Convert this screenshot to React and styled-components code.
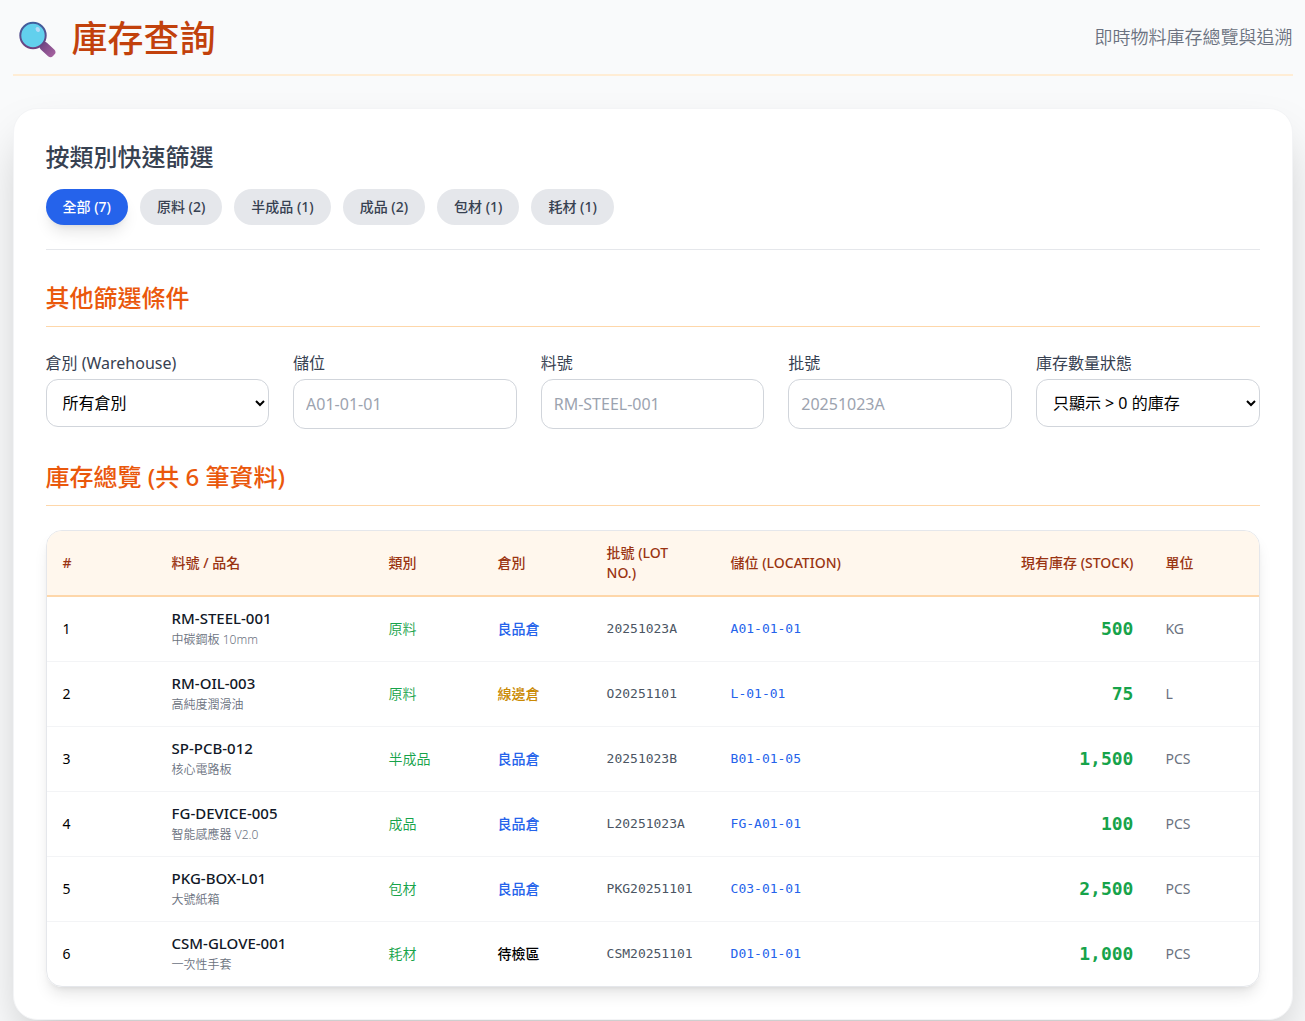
import React, { useState } from 'react';
import styled, { createGlobalStyle } from 'styled-components';

const GlobalStyle = createGlobalStyle`
*{
box-sizing: border-box;
}
body{
margin: 0;
background: #f9fafb;
color: #000;
font-family: 'Noto Sans', 'Noto Sans CJK TC', sans-serif;
font-size: 16px;
line-height: 24px;
}
`
const Page = styled.div`
max-width: 1280px;
margin: 0 auto;
padding-bottom: 32px;
`
const Header = styled.header`
display: flex;
justify-content: space-between;
align-items: center;
padding: 16px 0;
border-bottom: 2px solid #ffedd5;
margin-bottom: 32px;
`
const PageTitle = styled.h1`
display: flex;
align-items: center;
gap: 12px;
margin: 0;
padding: 4px 0 0 3px;
font-size: 36px;
font-weight: 500;
line-height: 38px;
color: #c2410c;
`
const Subtitle = styled.p`
margin: 0;
font-size: 18px;
font-weight: 350;
line-height: 28px;
color: #6b7280;
`
const Card = styled.main`
background: white;
border: 1px solid #f3f4f6;
border-radius: 24px;
padding: 32px;
box-shadow: 0 25px 50px -12px rgba(0, 0, 0, 0.25);
`
const QuickFilter = styled.section`
padding-bottom: 24px;
border-bottom: 1px solid #e5e7eb;
margin-bottom: 32px;
`
const QuickTitle = styled.h2`
margin: 0 0 16px;
font-size: 24px;
font-weight: 500;
line-height: 32px;
color: #374151;
`
const Pills = styled.div`
display: flex;
flex-wrap: wrap;
gap: 12px;
`
const Pill = styled.button`
border: none;
border-radius: 18px;
padding: 8px 17px;
font-family: inherit;
font-size: 14px;
font-weight: 500;
line-height: 20px;
cursor: pointer;
color: ${props => props.$active ? 'white' : '#374151'};
background: ${props => props.$active ? '#2563eb' : '#e5e7eb'};
box-shadow: ${props => props.$active ? '0 10px 15px -3px rgba(0, 0, 0, 0.1), 0 4px 6px -4px rgba(0, 0, 0, 0.1)' : 'none'};
`
const SectionTitle = styled.h2`
margin: 0 0 24px;
padding-bottom: 12px;
border-bottom: 1px solid #fed7aa;
font-size: 24px;
font-weight: 500;
line-height: 32px;
color: #ea580c;
`
const Filters = styled.div`
display: grid;
grid-template-columns: repeat(5, minmax(0, 1fr));
gap: 24px;
align-items: start;
margin-bottom: 32px;
`
const Field = styled.div`
display: flex;
flex-direction: column;
gap: 4px;
`
const Label = styled.label`
color: #374151;
`
const Select = styled.select`
width: 100%;
height: 48px;
padding: 0 0 0 12px;
border: 1px solid #d1d5db;
border-radius: 12px;
background: white;
color: #000;
font-family: inherit;
font-size: 16px;
`
const Input = styled.input`
width: 100%;
height: 50px;
padding: 12px;
border: 1px solid #d1d5db;
border-radius: 12px;
background: white;
font-family: inherit;
font-size: 16px;
&::placeholder{
color: #9ca3af;
}
`
const TableBox = styled.div`
overflow: hidden;
border: 1px solid #e5e7eb;
border-radius: 16px;
box-shadow: 0 10px 15px -3px rgba(0, 0, 0, 0.1), 0 4px 6px -4px rgba(0, 0, 0, 0.1);
`
const Table = styled.table`
width: 100%;
table-layout: fixed;
border-collapse: separate;
border-spacing: 0;
font-size: 14px;
line-height: 20px;
`
const Col = styled.col`
width: ${props => props.$width};
`
const Th = styled.th`
padding: 12px 16px;
background: #fff7ed;
border-bottom: 2px solid #fed7aa;
color: #9a3412;
font-weight: 500;
text-align: ${props => props.$right ? 'right' : 'left'};
`
const Row = styled.tr`
&:not(:last-child) td{
border-bottom: 1px solid #f3f4f6;
}
`
const Td = styled.td`
padding: 12px 16px;
`
const ItemCode = styled.div`
font-size: 15px;
font-weight: 500;
line-height: 18px;
color: #111827;
`
const ItemName = styled.div`
margin-top: 4px;
font-size: 12px;
font-weight: 350;
line-height: 18px;
color: #6b7280;
`
const Category = styled(Td)`
font-weight: 350;
color: #16a34a;
`
const Warehouse = styled(Td)`
font-weight: 500;
color: ${props => props.$color};
`
const Mono = styled(Td)`
font-family: 'DejaVu Sans Mono', monospace;
font-size: 13px;
color: ${props => props.$color};
`
const Stock = styled(Td)`
font-family: 'DejaVu Sans Mono', monospace;
font-size: 18px;
font-weight: 700;
text-align: right;
color: #16a34a;
`
const Unit = styled(Td)`
color: #6b7280;
`

const categories = [
    { name: '全部', count: 7 },
    { name: '原料', count: 2 },
    { name: '半成品', count: 1 },
    { name: '成品', count: 2 },
    { name: '包材', count: 1 },
    { name: '耗材', count: 1 },
];

const warehouseColors = {
    '良品倉': '#2563eb',
    '線邊倉': '#ca8a04',
    '待檢區': '#000',
};

const stockList = [
    { code: 'RM-STEEL-001', name: '中碳鋼板 10mm', category: '原料', warehouse: '良品倉', lot: '20251023A', location: 'A01-01-01', stock: 500, unit: 'KG' },
    { code: 'RM-OIL-003', name: '高純度潤滑油', category: '原料', warehouse: '線邊倉', lot: 'O20251101', location: 'L-01-01', stock: 75, unit: 'L' },
    { code: 'SP-PCB-012', name: '核心電路板', category: '半成品', warehouse: '良品倉', lot: '20251023B', location: 'B01-01-05', stock: 1500, unit: 'PCS' },
    { code: 'FG-DEVICE-005', name: '智能感應器 V2.0', category: '成品', warehouse: '良品倉', lot: 'L20251023A', location: 'FG-A01-01', stock: 100, unit: 'PCS' },
    { code: 'PKG-BOX-L01', name: '大號紙箱', category: '包材', warehouse: '良品倉', lot: 'PKG20251101', location: 'C03-01-01', stock: 2500, unit: 'PCS' },
    { code: 'CSM-GLOVE-001', name: '一次性手套', category: '耗材', warehouse: '待檢區', lot: 'CSM20251101', location: 'D01-01-01', stock: 1000, unit: 'PCS' },
];

const SearchLogo = () => (
    <svg width="44" height="38" viewBox="0 0 44 38" aria-hidden="true">
        <defs>
            <linearGradient id="rim" x1="0" y1="0" x2="0" y2="1">
                <stop offset="0" stopColor="#3f5f9e" />
                <stop offset="1" stopColor="#70417f" />
            </linearGradient>
            <linearGradient id="handle" x1="0" y1="0" x2="1" y2="0">
                <stop offset="0" stopColor="#6f4380" />
                <stop offset="1" stopColor="#a5619f" />
            </linearGradient>
        </defs>
        <rect x="23" y="25" width="17" height="9" rx="3.500" fill="url(#handle)" transform="rotate(43 31.500 29.500)" />
        <circle cx="17" cy="15.500" r="12.700" fill="#62d0ed" stroke="url(#rim)" strokeWidth="2" />
        <ellipse cx="21.800" cy="9.500" rx="2" ry="2.600" fill="#b3daf7" transform="rotate(-35 21.800 9.500)" />
    </svg>
);

const App = () => {
    const [category, setCategory] = useState('全部');
    const [warehouse, setWarehouse] = useState('');
    const [location, setLocation] = useState('');
    const [code, setCode] = useState('');
    const [lot, setLot] = useState('');
    const [status, setStatus] = useState('positive');

    const has = (text, part) => text.toLowerCase().includes(part.toLowerCase());

    const list = stockList.filter(item =>
        (category === '全部' || item.category === category)
        && (!warehouse || item.warehouse === warehouse)
        && has(item.location, location)
        && has(item.code, code)
        && has(item.lot, lot)
        && (status === 'all' || item.stock > 0)
    );

    return (
        <Page>
            <GlobalStyle />
            <Header>
                <PageTitle><SearchLogo />庫存查詢</PageTitle>
                <Subtitle>即時物料庫存總覽與追溯</Subtitle>
            </Header>
            <Card>
                <QuickFilter>
                    <QuickTitle>按類別快速篩選</QuickTitle>
                    <Pills>
                        {categories.map(item => (
                            <Pill key={item.name} $active={item.name === category} onClick={() => setCategory(item.name)}>
                                {`${item.name} (${item.count})`}
                            </Pill>
                        ))}
                    </Pills>
                </QuickFilter>

                <SectionTitle>其他篩選條件</SectionTitle>
                <Filters>
                    <Field>
                        <Label htmlFor="warehouse">倉別 (Warehouse)</Label>
                        <Select id="warehouse" value={warehouse} onChange={(e) => setWarehouse(e.target.value)}>
                            <option value="">所有倉別</option>
                            {Object.keys(warehouseColors).map(name => <option key={name} value={name}>{name}</option>)}
                        </Select>
                    </Field>
                    <Field>
                        <Label htmlFor="location">儲位</Label>
                        <Input id="location" placeholder="A01-01-01" value={location} onChange={(e) => setLocation(e.target.value)} />
                    </Field>
                    <Field>
                        <Label htmlFor="code">料號</Label>
                        <Input id="code" placeholder="RM-STEEL-001" value={code} onChange={(e) => setCode(e.target.value)} />
                    </Field>
                    <Field>
                        <Label htmlFor="lot">批號</Label>
                        <Input id="lot" placeholder="20251023A" value={lot} onChange={(e) => setLot(e.target.value)} />
                    </Field>
                    <Field>
                        <Label htmlFor="status">庫存數量狀態</Label>
                        <Select id="status" value={status} onChange={(e) => setStatus(e.target.value)}>
                            <option value="positive">只顯示 &gt; 0 的庫存</option>
                            <option value="all">顯示全部</option>
                        </Select>
                    </Field>
                </Filters>

                <SectionTitle>{`庫存總覽 (共 ${list.length} 筆資料)`}</SectionTitle>
                <TableBox>
                    <Table>
                        <colgroup>
                            <Col $width="9%" />
                            <Col $width="217px" />
                            <Col $width="109px" />
                            <Col $width="109px" />
                            <Col $width="124px" />
                            <Col $width="18%" />
                            <Col />
                            <Col $width="9%" />
                        </colgroup>
                        <thead>
                            <tr>
                                <Th>#</Th>
                                <Th>料號 / 品名</Th>
                                <Th>類別</Th>
                                <Th>倉別</Th>
                                <Th>批號 (LOT NO.)</Th>
                                <Th>儲位 (LOCATION)</Th>
                                <Th $right>現有庫存 (STOCK)</Th>
                                <Th>單位</Th>
                            </tr>
                        </thead>
                        <tbody>
                            {list.map((item, i) => (
                                <Row key={item.code}>
                                    <Td>{i + 1}</Td>
                                    <Td>
                                        <ItemCode>{item.code}</ItemCode>
                                        <ItemName>{item.name}</ItemName>
                                    </Td>
                                    <Category>{item.category}</Category>
                                    <Warehouse $color={warehouseColors[item.warehouse]}>{item.warehouse}</Warehouse>
                                    <Mono $color="#4b5563">{item.lot}</Mono>
                                    <Mono $color="#2563eb">{item.location}</Mono>
                                    <Stock>{item.stock.toLocaleString('en-US')}</Stock>
                                    <Unit>{item.unit}</Unit>
                                </Row>
                            ))}
                        </tbody>
                    </Table>
                </TableBox>
            </Card>
        </Page>
    );
};

export default App;
